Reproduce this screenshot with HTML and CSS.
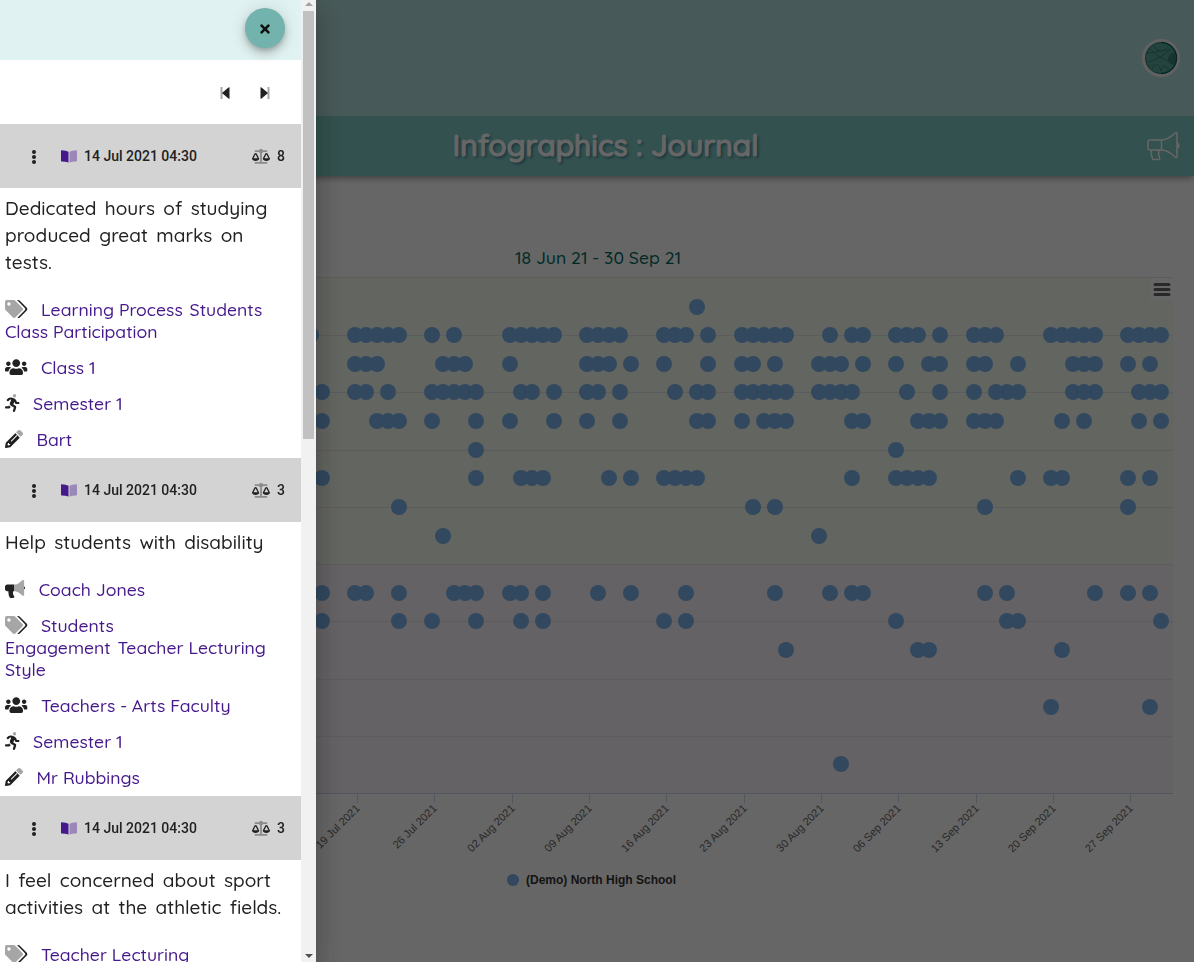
FILE: index.html
```html
<!DOCTYPE html>
<html lang="en">
<head>
    <meta charset="UTF-8">
    <meta name="viewport" content="width=device-width, initial-scale=1.0">
    <title>Infographics : Journal</title>
    <link rel="stylesheet" href="styles.css">
</head>
<body>

    <!-- shared icons -->
    <svg class="icon-defs" xmlns="http://www.w3.org/2000/svg">
        <symbol id="dots" viewBox="0 0 6 14">
            <circle cx="3" cy="2" r="2"/><circle cx="3" cy="7" r="2"/><circle cx="3" cy="12" r="2"/>
        </symbol>
        <symbol id="book" viewBox="0 0 16 13">
            <path d="M0 .8Q0 .2.7.3Q5 .4 7.5 1.7V12.6Q4.500 11.400.7 11.400Q0 11.400 0 10.700z"/>
            <path opacity=".4" d="M16 .8Q16 .2 15.300.3Q11 .4 8.500 1.700V12.600Q11.500 11.400 15.300 11.400Q16 11.400 16 10.700z"/>
        </symbol>
        <symbol id="scale" viewBox="0 0 640 512">
            <path opacity=".4" d="M528 32H391a80 80 0 0 0-142 0H112c-9 0-16 7-16 16v32c0 9 7 16 16 16h129c8 18 24 32 47 38v314H112c-9 0-16 7-16 16v32c0 9 7 16 16 16h416c9 0 16-7 16-16v-32c0-9-7-16-16-16H352V134c20-6 38-20 47-38h129c9 0 16-7 16-16V48c0-9-7-16-16-16z"/>
            <path fill-rule="evenodd" d="M256 336c0-16 1-9-85-181-17-35-68-35-86 0C-1 328 0 321 0 336c0 44 57 80 128 80s128-36 128-80zM128 176l72 144H56zM640 336c0-16 1-9-85-181-17-35-68-35-86 0-86 173-85 166-85 181 0 44 57 80 128 80s128-36 128-80zM512 176l72 144H440z"/>
        </symbol>
        <symbol id="tags" viewBox="0 0 640 512">
            <path opacity=".4" fill-rule="evenodd" d="M498 226L286 14a48 48 0 0 0-34-14H48A48 48 0 0 0 0 48v204c0 13 5 25 14 34l212 212c19 19 49 19 68 0l204-204c19-19 19-49 0-68zM112 160a48 48 0 1 1 0-96 48 48 0 0 1 0 96z"/>
            <path d="M626 226L414 14A48 48 0 0 0 380 0h-38l220 226c19 19 19 49 0 68L354 502c20 16 48 14 68-4l204-204c19-19 19-49 0-68z"/>
        </symbol>
        <symbol id="users" viewBox="0 0 640 512">
            <path d="M96 224c35.300 0 64-28.700 64-64s-28.700-64-64-64-64 28.700-64 64 28.700 64 64 64zm448 0c35.300 0 64-28.700 64-64s-28.700-64-64-64-64 28.700-64 64 28.700 64 64 64zm32 32h-64c-17.600 0-33.500 7.100-45.100 18.600 40.300 22.100 68.900 62 75.100 109.400h66c17.700 0 32-14.300 32-32v-32c0-35.300-28.700-64-64-64zm-256 0c61.900 0 112-50.100 112-112S381.900 32 320 32 208 82.100 208 144s50.100 112 112 112zm76.800 32h-8.300c-20.800 10-43.900 16-68.500 16s-47.600-6-68.500-16h-8.300C179.600 288 128 339.600 128 403.200V432c0 26.500 21.500 48 48 48h288c26.500 0 48-21.500 48-48v-28.800c0-63.600-51.600-115.200-115.200-115.200zm-223.700-13.400C161.500 263.100 145.600 256 128 256H64c-35.300 0-64 28.700-64 64v32c0 17.700 14.300 32 32 32h65.900c6.300-47.400 34.900-87.300 75.200-109.400z"/>
        </symbol>
        <symbol id="running" viewBox="0 0 416 512">
            <circle opacity=".4" cx="272" cy="48" r="48"/>
            <path d="M113.690 317.470l-14.800 34.520H32c-17.670 0-32 14.330-32 32s14.330 32 32 32h77.450c19.250 0 36.580-11.440 44.110-29.090l8.790-20.520-10.670-6.300c-17.320-10.230-30.060-25.370-37.990-42.610zM384 223.990h-44.030l-26.060-53.250c-12.500-25.550-35.450-44.230-61.780-50.940l-71.080-21.140c-28.300-6.800-57.770-.55-80.840 17.140l-39.670 30.410c-14.030 10.750-16.690 30.830-5.920 44.860s30.840 16.660 44.860 5.920l39.690-30.410c7.670-5.890 17.440-8 25.270-6.140l14.700 4.370-37.460 87.390c-12.620 29.480-1.310 64.010 26.300 80.310l84.980 50.170-27.470 87.730c-5.280 16.860 4.110 34.820 20.970 40.100 3.190 1 6.410 1.480 9.580 1.480 13.610 0 26.230-8.770 30.520-22.450l31.640-101.060c5.910-20.770-2.890-43.080-21.640-54.390l-61.240-36.140 31.310-78.280 20.270 41.430c8 16.340 24.920 26.890 43.110 26.890H384c17.670 0 32-14.330 32-32s-14.330-32-32-32z"/>
        </symbol>
        <symbol id="pencil" viewBox="0 0 512 512">
            <path opacity=".4" d="M498 142l-46 46c-5 5-12 5-17 0L324 77c-5-5-5-12 0-17l46-46c19-19 49-19 68 0l60 60c19 19 19 49 0 68z"/>
            <path fill-rule="evenodd" d="M413 210L302 99c-5-5-12-5-17 0L22 362 0 484c-3 17 11 31 28 28l122-21 263-264c5-5 5-12 0-17zM144 424l-54 18-20-20 18-54h26v30h30zM170 324c-5-5-5-13 0-18l154-154c5-5 13-5 18 0s5 13 0 18L188 324c-5 5-13 5-18 0z"/>
        </symbol>
        <symbol id="horn" viewBox="0 0 576 512">
            <path opacity=".4" d="M544 32c0-26-20-32-32-32-7 0-14 2-20 7l-85 68c-43 34-96 53-151 53v192c55 0 108 19 151 53l85 68c6 5 13 7 20 7 20 0 32-16 32-32z"/>
            <path d="M544 184v80c19-6 32-20 32-40s-13-34-32-40zM256 128H64c-35 0-64 29-64 64v64c0 35 29 64 64 64h34c-5 65 8 120 31 174 6 11 17 18 31 18h74c26 0 42-30 26-51-34-45-40-88-27-141h23z"/>
        </symbol>
    </svg>

    <div class="page">
        <header class="topbar">
            <svg class="avatar" viewBox="0 0 38 38">
                <circle cx="19" cy="19" r="17.500" fill="#5aa89f" stroke="#f5f0f2" stroke-width="3"/>
                <path d="M32 13a14 14 0 0 1 0 13c-4-1-7-4-6-7 1-3 3-5 6-6z" fill="#3d8078"/>
                <path d="M19 3.500a15.500 15.500 0 0 1 0 31" fill="none" stroke="#00695c" stroke-width="1.500"/>
                <g fill="none" stroke="#35857b">
                    <path d="M19 3.500a15.500 15.500 0 0 0 0 31M5 14c8 0 14-3 24-3M7 9c7 7 14 12 25 15M6 23c8-2 15-6 22-13M10 30c2-6 7-6 9 2M19 32c0-7 8-6 7 0M12 7c3 6 10 7 14 1"/>
                </g>
            </svg>
        </header>
        <div class="titlebar">
            <h1>Infographics : Journal</h1>
            <svg class="megaphone" viewBox="0 0 34 32" fill="none" stroke="#fff" stroke-width="1.500">
                <path d="M4 9H15.500C21 9 26 5 29 2Q31 .5 31 3V25Q31 28 29 26C26 23 21 19 15.500 19H4Q2 19 2 17V11Q2 9 4 9zM15.500 9V19M5 19.500Q5 24 6.500 27.500Q6.800 28.500 8 28.500H12.500Q14.500 28.500 13.500 26.500Q12 23 12.800 19.500M31.500 12Q33 13 33 14.500Q33 16 31.500 17"/>
            </svg>
        </div>
        <p class="period">18 Jun 21 - 30 Sep 21</p>
        <svg class="chart" id="chart" viewBox="0 272 1194 640">
            <rect x="100" y="278" width="1073" height="287" fill="#f8fcf2"/>
            <rect x="100" y="565" width="1073" height="229" fill="#fcf4fc"/>
            <g id="grid" stroke="#e6e6e6"></g>
            <path d="M100 793.500H1173" stroke="#ccd6eb"/>
            <g id="ticks" stroke="#ccd6eb"></g>
            <g id="labels"></g>
            <g id="points" fill="#7cb5ec"></g>
            <rect x="1150" y="278" width="24" height="22" fill="#fff"/>
            <path d="M1155 284.500h14M1155 289.500h14M1155 294.500h14" stroke="#666" stroke-width="3" stroke-linecap="round"/>
            <circle cx="513" cy="880" r="6" fill="#7cb5ec"/>
            <text class="legend" x="526" y="884">(Demo) North High School</text>
        </svg>
    </div>

    <div class="backdrop"></div>

    <aside class="drawer">
        <div class="drawer-body">
            <div class="drawer-head">
                <button class="close">
                    <svg width="10" height="14" viewBox="0 0 352 512"><path d="M242.720 256l100.070-100.070c12.280-12.280 12.280-32.190 0-44.480l-22.240-22.240c-12.280-12.280-32.190-12.280-44.480 0L176 189.280 75.930 89.210c-12.280-12.280-32.190-12.280-44.480 0L9.210 111.450c-12.280 12.280-12.280 32.190 0 44.480L109.280 256 9.210 356.070c-12.280 12.280-12.280 32.190 0 44.480l22.240 22.240c12.280 12.280 32.200 12.280 44.480 0L176 322.720l100.070 100.070c12.280 12.280 32.200 12.280 44.480 0l22.240-22.240c12.280-12.280 12.280-32.190 0-44.480L242.720 256z"/></svg>
                </button>
            </div>
            <div class="pager">
                <svg width="10" height="14" viewBox="0 0 10 14"><path opacity=".4" d="M.5 1h2v12h-2z"/><path d="M9.500 1.800V12.200Q9.500 13.300 8.500 12.600L2.500 7.600Q2 7 2.500 6.400L8.500 1.400Q9.500.7 9.500 1.800z"/></svg>
                <svg width="10" height="14" viewBox="0 0 10 14"><path opacity=".4" d="M7.500 1h2v12h-2z"/><path d="M.5 1.800V12.200Q.5 13.300 1.500 12.600L7.500 7.600Q8 7 7.500 6.400L1.500 1.400Q.5.700.5 1.800z"/></svg>
            </div>

            <section class="entry">
                <div class="entry-head">
                    <svg class="dots"><use href="#dots"/></svg>
                    <svg class="book"><use href="#book"/></svg>
                    <span class="date">14 Jul 2021 04:30</span>
                    <svg class="scale"><use href="#scale"/></svg>
                    <span>8</span>
                </div>
                <p class="story">Dedicated hours of studying<br>produced great marks on<br>tests.</p>
                <div class="item"><svg class="w-22"><use href="#tags"/></svg><a>Learning Process</a> <a>Students</a><br><a>Class Participation</a></div>
                <div class="item"><svg class="w-22"><use href="#users"/></svg><a>Class 1</a></div>
                <div class="item"><svg class="w-14"><use href="#running"/></svg><a>Semester 1</a></div>
                <div class="item"><svg class="w-18"><use href="#pencil"/></svg><a>Bart</a></div>
            </section>

            <section class="entry">
                <div class="entry-head">
                    <svg class="dots"><use href="#dots"/></svg>
                    <svg class="book"><use href="#book"/></svg>
                    <span class="date">14 Jul 2021 04:30</span>
                    <svg class="scale"><use href="#scale"/></svg>
                    <span>3</span>
                </div>
                <p class="story">Help students with disability</p>
                <div class="item"><svg class="w-20"><use href="#horn"/></svg><a>Coach Jones</a></div>
                <div class="item"><svg class="w-22"><use href="#tags"/></svg><a>Students<br>Engagement</a> <a>Teacher Lecturing<br>Style</a></div>
                <div class="item"><svg class="w-22"><use href="#users"/></svg><a>Teachers - Arts Faculty</a></div>
                <div class="item"><svg class="w-14"><use href="#running"/></svg><a>Semester 1</a></div>
                <div class="item"><svg class="w-18"><use href="#pencil"/></svg><a>Mr Rubbings</a></div>
            </section>

            <section class="entry">
                <div class="entry-head">
                    <svg class="dots"><use href="#dots"/></svg>
                    <svg class="book"><use href="#book"/></svg>
                    <span class="date">14 Jul 2021 04:30</span>
                    <svg class="scale"><use href="#scale"/></svg>
                    <span>3</span>
                </div>
                <p class="story">I feel concerned about sport<br>activities at the athletic fields.</p>
                <div class="item"><svg class="w-22"><use href="#tags"/></svg><a>Teacher Lecturing</a></div>
            </section>
        </div>
        <div class="scrollbar">
            <span class="arrow up"></span>
            <span class="thumb"></span>
            <span class="arrow down"></span>
        </div>
    </aside>

    <script src="chart.js"></script>
</body>
</html>
```

FILE: styles.css
```css
* {
    box-sizing: border-box;
}
body {
    margin: 0;
    height: 962px;
    overflow: hidden;
    background: #fff;
    color: #212121;
    font-family: Quicksand, Lato, sans-serif;
    font-weight: 500;
}
.icon-defs {
    display: none;
}
svg {
    fill: currentColor;
}

/* page */
.page {
    height: 962px;
}
.topbar {
    display: flex;
    justify-content: flex-end;
    align-items: center;
    height: 116px;
    padding-right: 14px;
    background: #b2dfdb;
}
.avatar {
    width: 38px;
    height: 38px;
}
.titlebar {
    display: grid;
    grid-template-columns: 1fr auto 1fr;
    align-items: center;
    height: 60px;
    padding: 0 14px 0 31px;
    background: #80cbc4;
    box-shadow: 0 3px 5px -1px rgba(0, 0, 0, 0.25), 0 5px 8px -2px rgba(0, 0, 0, 0.14);
}
.titlebar h1 {
    grid-column: 2;
    margin: 0 0 3px;
    color: #fff;
    font-size: 30px;
    font-weight: 500;
    -webkit-text-stroke: 1.2px #fff;
    text-shadow: 2px 2px 3px #37718e;
    white-space: nowrap;
}
.megaphone {
    justify-self: end;
    width: 34px;
    height: 32px;
    margin-top: 2px;
    fill: none;
}
.period {
    height: 26px;
    margin: 68px 0 2px;
    padding-left: 2px;
    color: #00695c;
    font-size: 17.6px;
    line-height: 26px;
    text-align: center;
}
.chart {
    display: block;
    width: 1194px;
    height: 640px;
}
.chart text {
    font-family: "Liberation Sans", Arial, sans-serif;
    font-size: 11px;
    font-weight: 400;
    fill: #666;
}
.chart .legend {
    font-size: 12px;
    font-weight: bold;
    fill: #333;
}

.backdrop {
    position: fixed;
    inset: 0;
    background: rgba(0, 0, 0, 0.6);
}

/* drawer */
.drawer {
    position: fixed;
    top: 0;
    left: 0;
    display: flex;
    width: 316px;
    height: 962px;
    background: #fff;
    box-shadow: 0 8px 10px -5px rgba(0, 0, 0, 0.2), 0 16px 24px 2px rgba(0, 0, 0, 0.14), 0 6px 30px 5px rgba(0, 0, 0, 0.12);
}
.drawer-body {
    width: 301px;
    overflow: hidden;
}
.drawer-head {
    display: flex;
    justify-content: flex-end;
    height: 60px;
    padding: 8px 16px;
    background: #e0f2f1;
}
.close {
    display: flex;
    align-items: center;
    justify-content: center;
    width: 40px;
    height: 40px;
    padding: 2px 0 0;
    border: none;
    border-radius: 50%;
    background: #72b3ad;
    color: #111;
    box-shadow: 0 3px 5px -1px rgba(0, 0, 0, 0.2), 0 6px 10px rgba(0, 0, 0, 0.14), 0 1px 18px rgba(0, 0, 0, 0.12);
}
.pager {
    display: flex;
    justify-content: flex-end;
    align-items: center;
    gap: 30px;
    height: 64px;
    padding: 2px 31px 0 0;
}
.entry-head {
    display: flex;
    align-items: center;
    height: 64px;
    padding: 0 16px 0 31px;
    background: #d3d3d3;
    font: 500 14px Roboto, sans-serif;
}
.dots {
    width: 6px;
    height: 14px;
    margin: 2px 24px 0 0;
}
.book {
    width: 16px;
    height: 13px;
    margin-right: 7px;
    color: #45188c;
}
.date {
    flex: 1;
}
.scale {
    width: 18px;
    height: 15px;
    margin-right: 7px;
}
.story {
    margin: 7px 0 16px;
    padding-left: 5px;
    font-size: 19px;
    line-height: 27px;
    word-spacing: 3.2px;
    white-space: nowrap;
}
.item {
    padding: 6px 0 8px 5px;
    font-size: 17.6px;
    line-height: 22px;
    white-space: nowrap;
}
.item svg {
    height: 18px;
    margin-right: 13.5px;
    vertical-align: -2px;
}
.item a {
    color: #45188c;
}
.item a + a {
    margin-left: 2px;
}
.w-22 {
    width: 22.5px;
}
.w-20 {
    width: 20.25px;
}
.w-18 {
    width: 18px;
}
.w-14 {
    width: 14.6px;
}

.scrollbar {
    display: flex;
    flex-direction: column;
    align-items: center;
    width: 15px;
    background: #f1f1f1;
}
.thumb {
    width: 11px;
    height: 428px;
    margin-top: 5px;
    background: #c1c1c1;
}
.arrow {
    border: 4px solid transparent;
}
.arrow.up {
    margin-top: 2px;
    border-top: none;
    border-bottom-color: #a3a3a3;
}
.arrow.down {
    margin: auto 0 4px;
    border-bottom: none;
    border-top-color: #505050;
}
```

FILE: chart.js
```js
const NS = "http://www.w3.org/2000/svg";

// y position of each tag row and the days (counted from 19 Jul) it was used
const rows = [
    [307, [31]],
    [335, [-4, 0, 1, 2, 3, 4, 7, 9, 14, 15, 16, 17, 18, 21, 22, 23, 24, 28, 29, 30, 32, 35, 36, 37, 38, 39, 43, 45, 46, 49, 50, 51, 53, 56, 57, 58, 63, 64, 65, 66, 67, 70, 71, 72, 73]],
    [364, [0, 1, 2, 8, 9, 10, 14, 21, 22, 23, 25, 28, 32, 35, 36, 38, 42, 43, 44, 46, 49, 52, 53, 56, 57, 60, 65, 66, 67, 70, 72]],
    [392, [-3, 0, 1, 3, 7, 8, 9, 10, 11, 15, 16, 18, 21, 22, 24, 29, 31, 32, 35, 36, 37, 38, 39, 42, 43, 44, 45, 50, 53, 56, 58, 59, 60, 65, 66, 67, 71, 72, 73]],
    [421, [-3, 2, 3, 4, 7, 11, 14, 18, 21, 24, 31, 32, 35, 37, 38, 39, 45, 46, 51, 52, 53, 56, 57, 58, 64, 66, 71, 73]],
    [450, [11, 49]],
    [478, [-3, 11, 15, 16, 17, 23, 25, 28, 29, 30, 31, 45, 49, 50, 51, 52, 60, 63, 64, 70, 72]],
    [507, [4, 36, 38, 57, 70]],
    [536, [8, 42]],
    [593, [-3, 0, 1, 4, 9, 10, 11, 14, 15, 17, 22, 25, 30, 38, 43, 45, 46, 57, 59, 67, 70, 72]],
    [621, [-3, 4, 7, 11, 15, 17, 28, 30, 49, 59, 60, 73]],
    [650, [39, 51, 52, 64]],
    [707, [63, 72]],
    [764, [44]]
];

const weeks = ["19 Jul", "26 Jul", "02 Aug", "09 Aug", "16 Aug", "23 Aug", "30 Aug", "06 Sep", "13 Sep", "20 Sep", "27 Sep"];

function add(parent, name, attrs) {
    const el = document.createElementNS(NS, name);
    for (const key in attrs) {
        el.setAttribute(key, attrs[key]);
    }
    document.getElementById(parent).appendChild(el);
    return el;
}

[277.5, 335.5, 392.5, 450.5, 507.5, 564.5, 621.5, 679.5, 736.5].forEach((y) => {
    add("grid", "path", { d: `M100 ${y}H1173` });
});

rows.forEach(([y, days]) => {
    days.forEach((day) => {
        add("points", "circle", { cx: Math.round(355 + day * 11.045), cy: y, r: 8 });
    });
});

weeks.forEach((week, i) => {
    const x = Math.round(357 + i * 77.33) + 0.5;
    add("ticks", "path", { d: `M${x} 794v9` });
    const label = add("labels", "text", {
        x: x + 3,
        y: 809,
        "text-anchor": "end",
        transform: `rotate(-45 ${x + 3} 809)`
    });
    label.textContent = `${week} 2021`;
});
```
